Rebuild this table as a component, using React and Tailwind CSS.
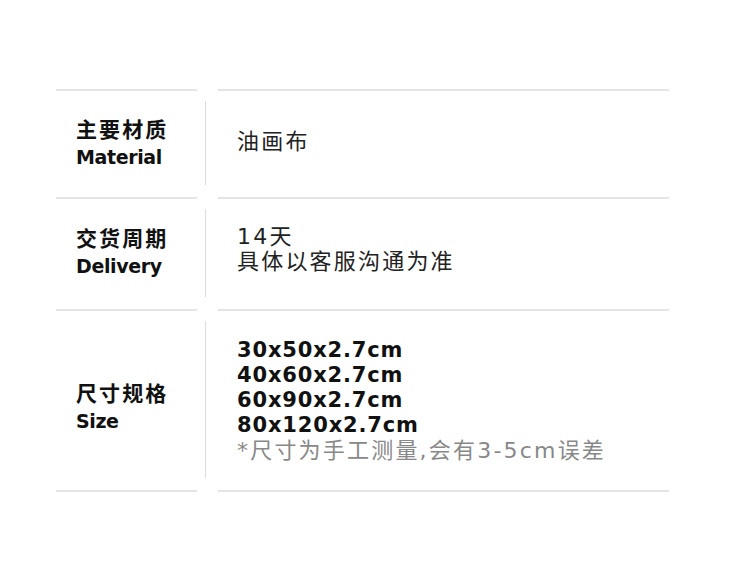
import React from 'react';

const font = "font-['DejaVu_Sans','Noto_Sans_CJK_SC',sans-serif]";

function Row({ zh, en, height, leftPad = '', rightPad = '', children }) {
  return (
    <div className={`flex ${height}`}>
      <div className={`w-[141px] border-t-2 border-[#e4e4e4] flex flex-col justify-center pl-5 ${leftPad}`}>
        <p className="text-[21px] leading-[27px] font-bold tracking-[0.1em] text-[#111]">{zh}</p>
        <p className="text-[19px] leading-[27px] font-bold tracking-[-0.02em] text-[#111]">{en}</p>
      </div>
      <div className="w-[21px] pl-2 pt-[12px] pb-[12px]">
        <div className="w-px h-full bg-[#dcdcdc]" />
      </div>
      <div className={`flex-1 border-t-2 border-[#e4e4e4] flex flex-col justify-center pl-[19px] ${rightPad}`}>
        {children}
      </div>
    </div>
  );
}

export default function App() {
  return (
    <div className={`w-[730px] h-[575px] bg-white pt-[89px] pl-[56px] ${font}`}>
      <div className="w-[613px]">
        <Row zh="主要材质" en="Material" height="h-[108px]" rightPad="pb-[5px]">
          <p className="text-[22px] leading-[27px] tracking-[0.1em] text-[#222]">油画布</p>
        </Row>
        <Row zh="交货周期" en="Delivery" height="h-[112px]" leftPad="pb-[3px]" rightPad="pb-[10px]">
          <p className="text-[22px] leading-[25px] tracking-[0.1em] text-[#222]">14天</p>
          <p className="text-[22px] leading-[25px] tracking-[0.1em] text-[#222]">具体以客服沟通为准</p>
        </Row>
        <Row zh="尺寸规格" en="Size" height="h-[181px]" leftPad="pt-[14px]">
          <div className="text-[21px] leading-[25px] font-bold tracking-[0.04em] text-[#111]">
            <p>30x50x2.7cm</p>
            <p>40x60x2.7cm</p>
            <p>60x90x2.7cm</p>
            <p>80x120x2.7cm</p>
          </div>
          <p className="text-[22px] leading-[26px] tracking-[0.1em] text-[#888]">*尺寸为手工测量,会有3-5cm误差</p>
        </Row>
        <div className="flex">
          <div className="w-[141px] border-t-2 border-[#e4e4e4]" />
          <div className="w-[21px]" />
          <div className="flex-1 border-t-2 border-[#e4e4e4]" />
        </div>
      </div>
    </div>
  );
}
